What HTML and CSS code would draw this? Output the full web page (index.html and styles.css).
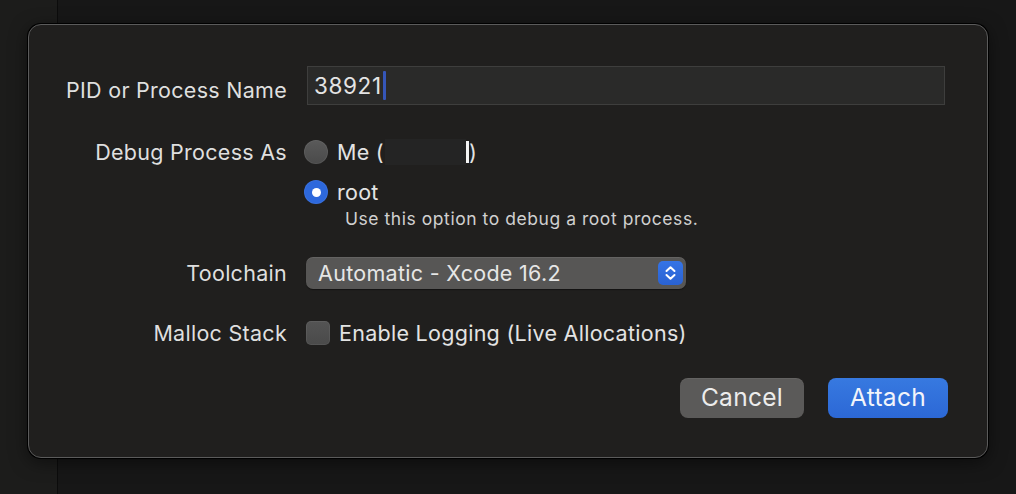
FILE: index.html
```html
<!DOCTYPE html>
<html>
<head>
<meta charset="utf-8">
<link rel="stylesheet" href="styles.css">
</head>
<body>
<div class="app">
  <div class="sidebar"></div>
  <div class="main"></div>
</div>
<div class="sheet">
  <div class="form">
    <div class="row row-pid">
      <div class="label">PID or Process Name</div>
      <div class="control">
        <div class="field"><span class="field-text">38921</span><span class="caret"></span></div>
      </div>
    </div>
    <div class="row row-debug">
      <div class="label">Debug Process As</div>
      <div class="control radios">
        <div class="radio-line">
          <span class="radio"></span>
          <span class="opt">Me (<span class="redact"></span><span class="bar"></span>)</span>
        </div>
        <div class="radio-line">
          <span class="radio on"><span class="dot"></span></span>
          <span class="opt">root</span>
        </div>
        <div class="hint">Use this option to debug a root process.</div>
      </div>
    </div>
    <div class="row row-tool">
      <div class="label">Toolchain</div>
      <div class="control">
        <div class="popup">
          <span class="popup-text">Automatic - Xcode 16.2</span>
          <span class="stepper">
            <svg width="25" height="24" viewBox="0 0 25 24"><path d="M8.5 10 L12.5 6.2 L16.5 10" fill="none" stroke="#fff" stroke-width="2" stroke-linecap="round" stroke-linejoin="round"/><path d="M8.5 14 L12.5 17.8 L16.5 14" fill="none" stroke="#fff" stroke-width="2" stroke-linecap="round" stroke-linejoin="round"/></svg>
          </span>
        </div>
      </div>
    </div>
    <div class="row row-malloc">
      <div class="label">Malloc Stack</div>
      <div class="control check-line">
        <span class="checkbox"></span>
        <span class="opt">Enable Logging (Live Allocations)</span>
      </div>
    </div>
  </div>
  <div class="buttons">
    <button class="btn cancel">Cancel</button>
    <button class="btn attach">Attach</button>
  </div>
</div>
</body>
</html>
```
FILE: styles.css
```css
* { box-sizing: border-box; }
html, body { margin: 0; padding: 0; }
body {
  width: 1016px;
  height: 494px;
  overflow: hidden;
  background: #161616;
  font-family: "Inter", "Noto Sans", sans-serif;
  color: #dedede;
  position: relative;
}
.app { display: flex; height: 494px; }
.sidebar {
  width: 58px;
  background: #1c1c1b;
  border-right: 1px solid #0c0c0c;
}
.main { flex: 1; background: #171717; }

.sheet {
  position: absolute;
  left: 28px;
  top: 24px;
  width: 960px;
  height: 434px;
  background: #201f1e;
  border: 1px solid #5b5b5b;
  border-radius: 13px;
  box-shadow: 0 0 0 1px #000, 0 4px 18px rgba(0,0,0,0.5);
  display: flex;
  flex-direction: column;
}
.form { padding-top: 41px; display: flex; flex-direction: column; }
.row { display: flex; align-items: flex-start; }
.label {
  width: 258px;
  text-align: right;
  font-size: 21.5px;
  line-height: 26px;
  letter-spacing: 0.28px;
  color: #dfdfdf;
  flex: none;
}
.control { margin-left: 17px; flex: none; }

.row-pid .label { margin-top: 11px; }
.field {
  margin-left: 3px;
  width: 638px;
  height: 39px;
  background: #2a2a29;
  border: 1px solid #3e3e3d;
  display: flex;
  align-items: center;
  padding-left: 6px;
}
.field-text { font-size: 22.5px; color: #e4e4e4; line-height: 26px; letter-spacing: 0.6px; }
.caret { width: 3px; height: 29px; background: #3556b8; border-radius: 1px; margin-left: 1px; }

.row-debug { margin-top: 34px; }
.radios { display: flex; flex-direction: column; }
.radio-line { display: flex; align-items: center; height: 26px; }
.radio-line + .radio-line { margin-top: 14px; }
.radio {
  width: 24px; height: 24px; border-radius: 50%;
  background: linear-gradient(#5a5a5a, #4a4a4a);
  box-shadow: inset 0 0 0 1px rgba(255,255,255,0.06);
  display: flex; align-items: center; justify-content: center;
  flex: none;
}
.radio.on { background: #2d68dc; }
.dot { width: 9px; height: 9px; border-radius: 50%; background: #fff; }
.opt { margin-left: 9px; font-size: 21.5px; line-height: 26px; letter-spacing: 0.28px; color: #e3e3e3; display: flex; align-items: center; }
.redact { display: inline-block; width: 81px; height: 26px; background: #242424; margin-left: 1px; }
.bar { display: inline-block; width: 3px; height: 22px; background: #f4f4f4; }
.hint { margin-left: 41px; margin-top: 3px; font-size: 17.5px; line-height: 22px; color: #d0d0d0; letter-spacing: 0.55px; }

.row-tool { margin-top: 27px; }
.row-tool .label { margin-top: 3px; }
.row-tool .control, .row-malloc .control { margin-left: 19px; }
.popup {
  width: 380px; height: 32px;
  background: #575655;
  border-radius: 7px;
  box-shadow: inset 0 1px 0 rgba(255,255,255,0.08), 0 1px 1px rgba(0,0,0,0.4);
  display: flex; align-items: center; justify-content: space-between;
  padding-left: 12px; padding-right: 3px;
}
.popup-text { font-size: 21.5px; color: #e6e6e6; line-height: 26px; letter-spacing: 0.3px; }
.stepper {
  width: 25px; height: 24px; border-radius: 5px;
  background: linear-gradient(#3574e6, #2a62d2);
  display: flex;
}

.row-malloc { margin-top: 31px; }
.check-line { display: flex; align-items: center; height: 26px; }
.checkbox {
  width: 24px; height: 24px; border-radius: 5px;
  background: linear-gradient(#545454, #4a4a4a);
  box-shadow: inset 0 0 0 1px rgba(255,255,255,0.06);
  flex: none;
}

.buttons {
  display: flex; justify-content: flex-end; gap: 24px;
  padding-right: 39px; margin-top: 32px;
}
.btn {
  height: 40px; border: none; border-radius: 8px;
  font-family: "Inter", "Noto Sans", sans-serif;
  font-size: 24.5px; color: #ececec; letter-spacing: 0.3px;
  padding: 0 0 2px;
}
.cancel { width: 124px; background: #5b5a59; box-shadow: inset 0 1px 0 rgba(255,255,255,0.06); }
.attach { width: 120px; background: linear-gradient(#3779e0, #2c68d6); color: #f2f4fa; }
```
